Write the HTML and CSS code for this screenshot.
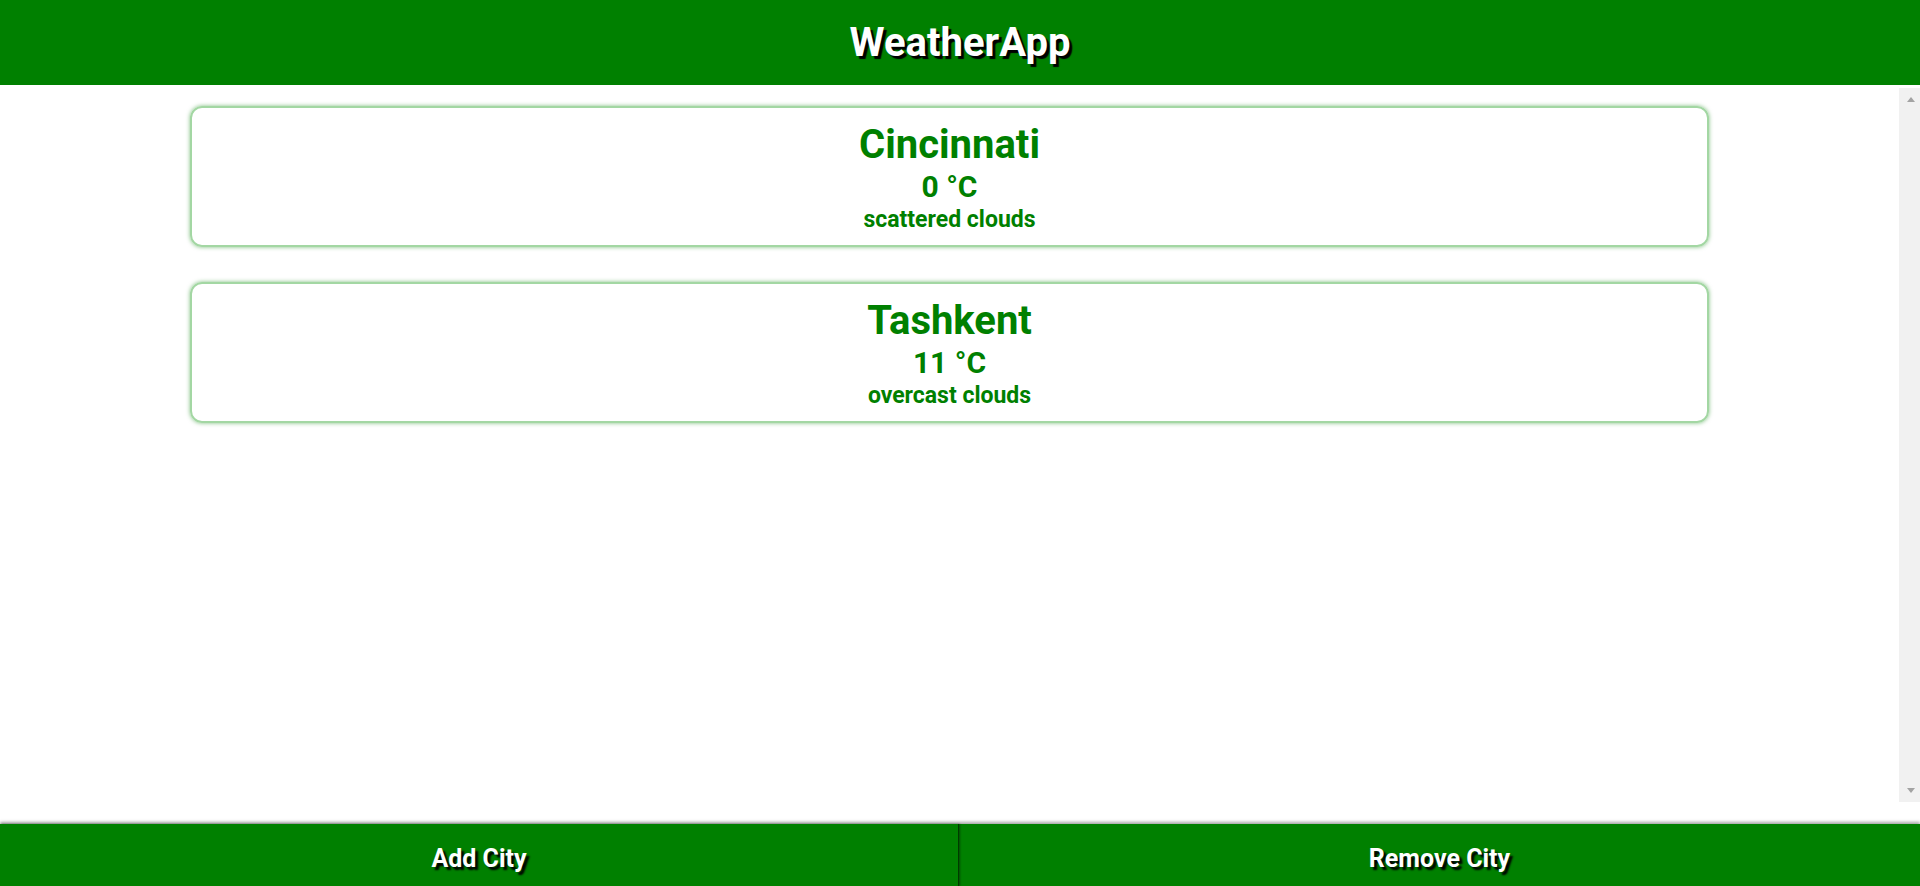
FILE: index.html
```html
<!DOCTYPE html>
<html lang="en">
<head>
<meta charset="utf-8">
<title>WeatherApp</title>
<link rel="stylesheet" href="styles.css">
</head>
<body>
<header class="app-header">
  <h1 class="app-title">WeatherApp</h1>
</header>
<main class="app-main">
  <section class="city-list">
    <article class="city-card">
      <h2 class="city-name">Cincinnati</h2>
      <p class="city-temp">0 °C</p>
      <p class="city-desc">scattered clouds</p>
    </article>
    <article class="city-card">
      <h2 class="city-name">Tashkent</h2>
      <p class="city-temp">11 °C</p>
      <p class="city-desc">overcast clouds</p>
    </article>
  </section>
  <div class="fake-scrollbar" aria-hidden="true">
    <span class="arrow arrow-up"></span>
    <span class="arrow arrow-down"></span>
  </div>
</main>
<footer class="app-footer">
  <button class="footer-btn footer-btn-left">Add City</button>
  <button class="footer-btn">Remove City</button>
</footer>
</body>
</html>
```

FILE: styles.css
```css
* { box-sizing: border-box; }

html, body {
  margin: 0;
  height: 100%;
}

body {
  display: flex;
  flex-direction: column;
  font-family: Roboto, "Liberation Sans", Arial, sans-serif;
  background: #ffffff;
  overflow: hidden;
}

.app-header {
  height: 85px;
  flex: 0 0 85px;
  background: #008000;
  display: flex;
  align-items: center;
  justify-content: center;
}

.app-title {
  margin: 0;
  color: #ffffff;
  font-size: 40px;
  font-weight: 700;
  line-height: 1;
  text-shadow: 3px 3px 1px #000000;
}

.app-main {
  flex: 1;
  display: flex;
  min-height: 0;
}

.city-list {
  flex: 1;
  display: flex;
  flex-direction: column;
  align-items: center;
  gap: 35px;
  padding-top: 21px;
}

.city-card {
  width: 80%;
  border: 2px solid #a3d7a3;
  border-radius: 12px;
  box-shadow: 0 0 4px rgba(0, 128, 0, 0.5);
  padding: 13px 0 9px;
  text-align: center;
  color: #008000;
  font-weight: 700;
}

.city-name {
  margin: 0;
  font-size: 40px;
  line-height: 48px;
  font-weight: 700;
}

.city-temp {
  margin: 0;
  font-size: 30px;
  line-height: 35px;
}

.city-desc {
  margin: 0;
  font-size: 23px;
  line-height: 32px;
}

.fake-scrollbar {
  width: 21px;
  flex: 0 0 21px;
  margin: 3px 0 22px;
  background: #f1f1f1;
  display: flex;
  flex-direction: column;
  justify-content: space-between;
  align-items: center;
  padding: 9px 0 9px 2px;
}

.arrow {
  width: 0;
  height: 0;
  border-left: 4px solid transparent;
  border-right: 4px solid transparent;
}

.arrow-up { border-bottom: 5px solid #a3a3a3; }
.arrow-down { border-top: 5px solid #a3a3a3; }

.app-footer {
  flex: 0 0 62px;
  height: 62px;
  display: flex;
  background: #008000;
  box-shadow: 0 -2px 3px rgba(0, 0, 0, 0.35);
  position: relative;
}

.footer-btn {
  flex: 1;
  border: none;
  background: #008000;
  color: #ffffff;
  font-family: Roboto, "Liberation Sans", Arial, sans-serif;
  font-size: 25px;
  font-weight: 700;
  text-shadow: 3px 3px 2px #000000;
  cursor: pointer;
  padding: 6px 0 0;
}

.footer-btn-left {
  flex: 0 0 959px;
  border-right: 1px solid #003a00;
  box-shadow: 1px 0 2px rgba(0, 0, 0, 0.4);
  position: relative;
  z-index: 1;
}
```
